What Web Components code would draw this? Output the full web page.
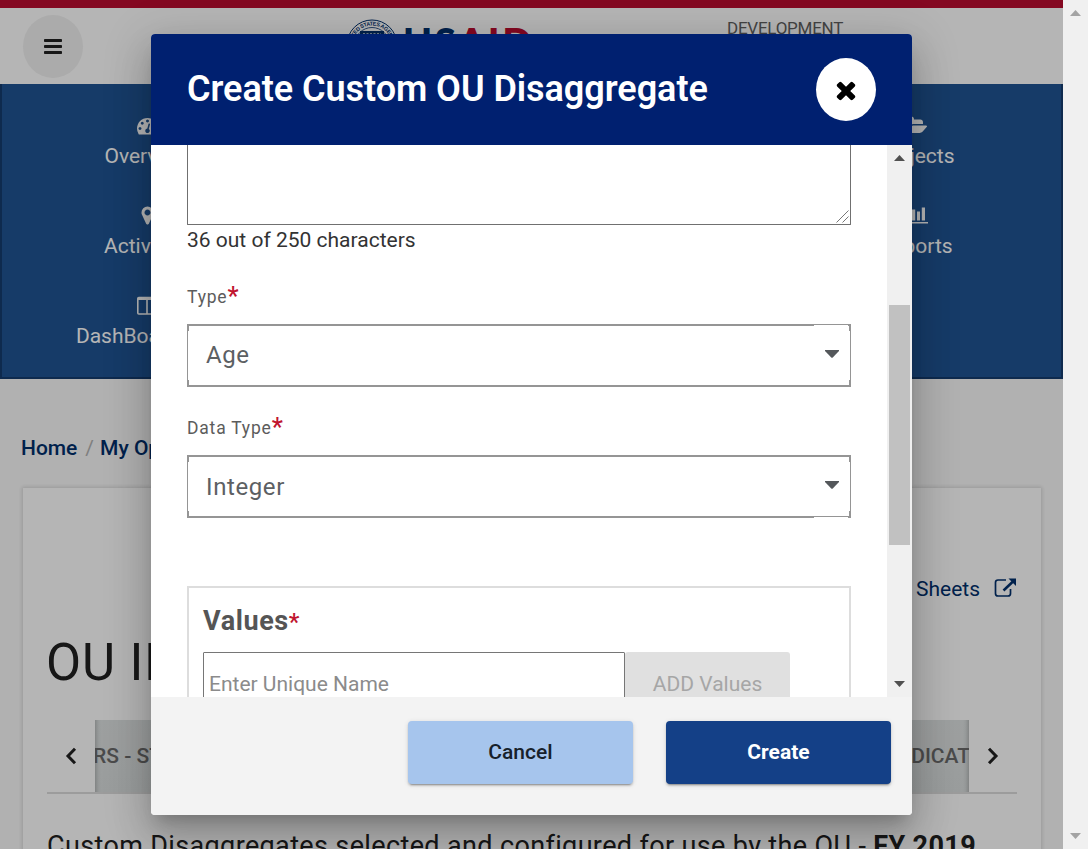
<!DOCTYPE html>
<html lang="en">
<head>
<meta charset="utf-8">
<title>Create Custom OU Disaggregate</title>
<style>
html,body{margin:0;padding:0;width:1088px;height:849px;overflow:hidden;font-family:Roboto,"Liberation Sans",sans-serif}
</style>
</head>
<body>
<ou-app></ou-app>
<script>
const define = (name, html) => customElements.define(name, class extends HTMLElement {
  constructor() {
    super();
    const t = document.createElement('template');
    t.innerHTML = html;
    this.attachShadow({mode: 'open'}).appendChild(t.content.cloneNode(true));
  }
});

define('site-header', `<style>
:host{display:flex;box-sizing:border-box;height:84px;border-top:8px solid #ba0c2f;background:#fff;position:relative}
.menu{width:60px;height:63px;border-radius:50%;background:#f1f1f1;margin:7px 0 0 23px;display:flex;align-items:center;justify-content:center}
.menu svg{margin-right:1px}
.seal{margin:11px 0 0 263px;width:52px;height:52px}
.word{margin:10px 0 0 5px;width:133px;font:900 39px/48px Lato,"Open Sans",sans-serif;color:#002f6c;white-space:nowrap;letter-spacing:2.5px}
.word b{color:#ba0c2f;font-weight:900}
.dev{margin:11px 0 0 191px;font-size:17px;line-height:18px;color:#606060;letter-spacing:-.25px}
</style>
<div class="menu"><svg width="18" height="15" viewBox="0 0 18 15"><g fill="#212121"><rect width="18" height="3" rx=".8"/><rect y="6" width="18" height="3" rx=".8"/><rect y="12" width="18" height="3" rx=".8"/></g></svg></div>
<svg class="seal" viewBox="0 0 52 52"><circle cx="26" cy="26" r="25" fill="none" stroke="#002f6c" stroke-width="1"/><defs><path id="arc" d="M6.5 26a19.5 19.5 0 0 1 39 0"/></defs><text font-family="Liberation Sans" font-weight="700" font-size="5.4" fill="#002f6c"><textPath href="#arc" textLength="60">UNITED STATES AGENCY</textPath></text><circle cx="26" cy="26" r="17.5" fill="none" stroke="#002f6c" stroke-width=".8"/><path fill="#002f6c" d="M14 12h24v15q0 8-12 14-12-6-12-14z"/><path d="M17 14.500h18" stroke="#fff" stroke-width=".6" stroke-dasharray="2 1.5"/></svg>
<div class="word">US<b>AID</b></div>
<div class="dev">DEVELOPMENT</div>`);

define('nav-item', `<style>
:host{display:flex;flex-direction:column;align-items:center;height:90px;color:#fff;font-size:21px;line-height:24px;white-space:nowrap}
.i{height:22px;margin:0 0 8px;display:flex;align-items:center}
</style><div class="i"><slot name="icon"></slot></div><div><slot></slot></div>`);

define('main-nav', `<style>
:host{display:flex;justify-content:space-between;box-sizing:border-box;height:295px;background:#205493;border:2px solid #153c6f;border-top:0;padding-top:30px}
.a{width:290px}.b{width:290px}
svg{display:block;fill:#fff}
</style>
<div class="a">
<nav-item><svg slot="icon" width="21" height="21" viewBox="0 0 1792 1792"><path d="M384 1152q0-53-37.5-90.5t-90.5-37.5-90.5 37.5-37.5 90.5 37.5 90.5 90.5 37.5 90.5-37.5 37.5-90.5zm192-448q0-53-37.5-90.5t-90.5-37.5-90.5 37.5-37.5 90.5 37.5 90.5 90.5 37.5 90.5-37.5 37.5-90.5zm428 481l101-382q6-26-7.5-48.5t-38.5-29.5-48 6.5-30 39.5l-101 382q-60 5-107 43.5t-63 98.5q-20 77 20 146t117 89 146-20 89-117q16-60-6-117t-72-91zm660-33q0-53-37.5-90.5t-90.5-37.5-90.5 37.5-37.5 90.5 37.5 90.5 90.5 37.5 90.5-37.5 37.5-90.5zm-640-640q0-53-37.5-90.5t-90.5-37.5-90.5 37.5-37.5 90.5 37.5 90.5 90.5 37.5 90.5-37.5 37.5-90.5zm448 192q0-53-37.5-90.5t-90.5-37.5-90.5 37.5-37.5 90.5 37.5 90.5 90.5 37.5 90.5-37.5 37.5-90.5zm320 448q0 261-141 483-19 29-54 29h-1402q-35 0-54-29-141-221-141-483 0-182 71-348t191-286 286-191 348-71 348 71 286 191 191 286 71 348z"/></svg>Overview</nav-item>
<nav-item><svg slot="icon" width="21" height="21" viewBox="0 0 1792 1792"><path d="M1152 640q0-106-75-181t-181-75-181 75-75 181 75 181 181 75 181-75 75-181zm256 0q0 109-33 179l-364 774q-16 33-47.5 52t-67.5 19-67.5-19-46.5-52l-365-774q-33-70-33-179 0-212 150-362t362-150 362 150 150 362z"/></svg>Activities</nav-item>
<nav-item><svg slot="icon" width="20" height="19" viewBox="0 0 20 19"><path fill="none" stroke="#fff" stroke-width="1.6" d="M1.8 1.500h16.400q1 0 1 1v14.500q0 1-1 1H1.800q-1 0-1-1V2.500q0-1 1-1zM10 3v15"/><path d="M1 1h18v3H1z"/></svg>DashBoard List</nav-item>
</div>
<div class="b">
<nav-item><svg slot="icon" width="22" height="21" viewBox="0 0 1879 1792"><path d="M1879 952q0 31-31 66l-336 396q-43 51-120.5 86.5t-143.5 35.5h-1088q-34 0-60.5-13t-26.5-43q0-31 31-66l336-396q43-51 120.5-86.5t143.5-35.5h1088q34 0 60.5 13t26.5 43zm-343-344v160h-832q-94 0-197 47.5t-164 119.5l-337 396-5 6q0-4-.5-12.5t-.5-12.5v-960q0-92 66-158t158-66h320q92 0 158 66t66 158v32h544q92 0 158 66t66 158z"/></svg>Projects</nav-item>
<nav-item><svg slot="icon" width="24" height="18" viewBox="0 0 24 18"><path d="M0 16h24v1.600H0zM3 9h3v5H3zM8 3.500h3.200V14.500H8zM13 5.500h3v9h-3zM17.800 1.500h3.200v13h-3.200z"/></svg>Reports</nav-item>
</div>`);

define('bread-crumb', `<style>
:host{display:block;padding:57px 0 0 21px;height:24px;font-size:21px;line-height:24px;font-weight:500;color:#002f6c;white-space:nowrap}
i{font-style:normal;font-weight:400;color:#b4b4b4;margin:0 6px 0 8px}
</style>Home<i>/</i>My Operating Unit`);

define('tab-strip', `<style>
:host{display:flex;align-items:stretch;width:970px;height:72px;border-bottom:2px solid #dcdcdc}
.c{width:48px;display:flex;align-items:center;justify-content:center}
.w{flex:1;overflow:hidden;display:flex;justify-content:space-between;align-items:center;background:linear-gradient(#dee2e2,#dadede);font-size:21px;font-weight:500;color:#6a6a6a;white-space:nowrap;box-shadow:inset 7px 0 5px -6px rgba(0,0,0,.25),inset -7px 0 5px -6px rgba(0,0,0,.25)}
.l{margin-left:-2px}.r{margin-right:-1px}
</style>
<div class="c"><svg width="12" height="18" viewBox="0 0 12 18"><path d="M10 1.8L3 9l7 7.2" fill="none" stroke="#212121" stroke-width="3"/></svg></div>
<div class="w"><span class="l">RS - STANDARD</span><span class="r">INDICAT</span></div>
<div class="c"><svg width="12" height="18" viewBox="0 0 12 18"><path d="M2 1.8L9 9l-7 7.2" fill="none" stroke="#212121" stroke-width="3"/></svg></div>`);

define('ou-card', `<style>
:host{display:block;box-sizing:border-box;margin:28px 0 0 23px;width:1018px;height:400px;padding:0 24px;background:#fff;box-shadow:0 0 4px 1px rgba(0,0,0,.15)}
.link{display:flex;justify-content:flex-end;align-items:center;padding-top:89px;height:24px;font-size:21px;line-height:24px;color:#002f6c;gap:14px}
.link svg{margin-top:-2px}
h1{margin:30px 0 0 -1px;font-size:51px;line-height:64px;font-weight:400;color:#212121;white-space:nowrap;letter-spacing:.9px}
tab-strip{margin-top:25px}
p{margin:36px 0 0;font-size:27px;line-height:32px;color:#212121;white-space:nowrap;letter-spacing:.36px}
b{font-weight:700}
</style>
<div class="link"><span>Reference Sheets</span><svg width="23" height="20" viewBox="0 0 23 20"><path fill="none" stroke="#002f6c" stroke-width="1.7" d="M12 2H4Q1.500 2 1.500 4.500V15.500Q1.500 18 4 18H14Q16.500 18 16.500 15.500V11"/><path d="M9.500 12.500L19 3.500" stroke="#002f6c" stroke-width="2.500"/><path fill="#002f6c" d="M14.500 .500H22V8z"/></svg></div>
<h1>OU INDICATORS</h1>
<tab-strip></tab-strip>
<p>Custom Disaggregates selected and configured for use by the OU - <b>FY 2019</b></p>`);

define('scroll-bar', `<style>
:host{display:flex;flex-direction:column;align-items:center;justify-content:space-between;box-sizing:border-box;width:25px;background:#f0f0f0;padding:10px 0;color:#505050}
svg{display:block;fill:currentColor}
</style><svg width="11" height="6" viewBox="0 0 11 6"><path d="M0 6L5.500 0 11 6z"/></svg><slot></slot><svg width="11" height="6" viewBox="0 0 11 6"><path d="M0 0L5.500 6 11 0z"/></svg>`);

define('select-field', `<style>
:host{display:block}
label{display:block;height:26px;font-size:17.500px;line-height:26px;color:#5c5c5c;letter-spacing:.8px;white-space:nowrap}
label b{font-weight:500;color:#c0142f;font-size:25px;line-height:20px;letter-spacing:0;position:relative;top:2px}
.s{position:relative;display:flex;align-items:center;justify-content:space-between;box-sizing:border-box;height:63px;margin-top:14px;border:2px solid #959595;border-left-width:1px;border-right-width:1px;padding:0 11px 0 18px;font-size:24px;letter-spacing:.6px;color:#5c6063;background:#fff}
.s>svg{margin-top:-4px}
:host([cut=top]) .s>span{margin-top:-2px}
.s:after{content:"";position:absolute;right:2px;width:34px;height:1px;background:#fff}
:host([cut=top]) .s:after{top:-1px}
:host([cut=bottom]) .s:after{bottom:-2px}
.k{position:absolute;width:1px;height:5px;background:#959595}
</style>
<label><slot name="label"></slot><b>*</b></label>
<div class="s"><span><slot></slot></span><svg width="14" height="8" viewBox="0 0 14 8"><path fill="#54585b" d="M0 0h14v1L7.500 7.800h-1L0 1z"/></svg>
<i class="k" style="left:0;top:0"></i><i class="k" style="left:0;bottom:0"></i><i class="k" style="right:0;top:0"></i><i class="k" style="right:0;bottom:0"></i></div>`);

define('values-box', `<style>
:host{display:block;box-sizing:border-box;border:2px solid #ddd;height:140px;padding:17px 14px}
h2{margin:0;font-size:27px;line-height:32px;font-weight:700;color:#555;letter-spacing:.6px}
h2 b{color:#c0142f;font-weight:500;font-size:24px;line-height:20px;letter-spacing:0}
.r{display:flex;margin-top:15px;font-size:21px}
.in{box-sizing:border-box;width:422px;height:63px;line-height:62px;border:1px solid #767676;border-radius:1px;padding-left:5px;color:#8b8b8b}
.bt{width:165px;height:63px;line-height:64px;text-align:center;background:#e0e0e0;border-radius:3px;color:#a6a6a6}
</style><h2>Values<b>*</b></h2><div class="r"><div class="in">Enter Unique Name</div><div class="bt">ADD Values</div></div>`);

define('app-button', `<style>
:host{display:block;width:225px;height:63px;line-height:62px;border-radius:4px;text-align:center;font-size:21px;font-weight:500;background:#a6c5ed;color:#17212b;box-shadow:0 3px 1px -2px rgba(0,0,0,.2),0 2px 2px 0 rgba(0,0,0,.14),0 1px 5px 0 rgba(0,0,0,.12)}
:host([primary]){background:#144087;color:#fff;font-weight:700}
</style><slot></slot>`);

define('modal-dialog', `<style>
:host{display:flex;flex-direction:column;width:761px;height:781px;border-radius:4px;overflow:hidden;background:#fff}
header{box-sizing:border-box;height:111px;background:#002070;display:flex;justify-content:space-between;align-items:center;padding:0 36px}
h1{margin:-2px 0 0;font-size:36px;line-height:44px;font-weight:600;letter-spacing:-.04px;color:#fff;white-space:nowrap}
.x{width:60px;height:63px;border-radius:50%;background:#fff;display:flex;align-items:center;justify-content:center}
.body{height:552px;overflow:hidden;display:flex;justify-content:space-between}
.f{width:664px;margin-left:36px}
.ta{box-sizing:border-box;height:80px;border:1px solid #707070;border-top:0;border-radius:0 0 1px 1px;display:flex;justify-content:flex-end;align-items:flex-end;padding:1px}
.count{font-size:21px;line-height:24px;margin:3px 0 32px;color:#333}
select-field{margin-bottom:28px}
values-box{margin-top:68px}
scroll-bar{height:552px}
.th{width:21px;height:240px;background:#c1c1c1;margin-top:8px}
footer{flex:1;background:#f3f3f3;display:flex;justify-content:flex-end;align-items:flex-start;gap:33px;padding:24px 21px 0}
</style>
<header><h1>Create Custom OU Disaggregate</h1><div class="x"><svg width="28" height="28" viewBox="0 0 1792 1792"><path d="M1490 1322q0 40-28 68l-136 136q-28 28-68 28t-68-28l-294-294-294 294q-28 28-68 28t-68-28l-136-136q-28-28-28-68t28-68l294-294-294-294q-28-28-28-68t28-68l136-136q28-28 68-28t68 28l294 294 294-294q28-28 68-28t68 28l136 136q28 28 28 68t-28 68l-294 294 294 294q28 28 28 68z"/></svg></div></header>
<div class="body"><div class="f">
<div class="ta"><svg width="13" height="13" viewBox="0 0 13 13"><path d="M.500 12.500l12-12M6.500 12.500l6-6" stroke="#777" stroke-width="1"/></svg></div>
<div class="count">36 out of 250 characters</div>
<select-field cut="top"><span slot="label">Type</span>Age</select-field>
<select-field cut="bottom"><span slot="label">Data Type</span>Integer</select-field>
<values-box></values-box>
</div><scroll-bar><div class="th"></div></scroll-bar></div>
<footer><app-button>Cancel</app-button><app-button primary>Create</app-button></footer>`);

define('ou-app', `<style>
:host{display:flex;position:relative;width:1088px;height:849px;overflow:hidden}
.page{width:1063px;background:#fafafa;overflow:hidden}
.veil{position:absolute;left:0;top:0;width:1063px;height:849px;box-sizing:border-box;padding:34px 0 0 151px;background:rgba(0,0,0,.29);overflow:hidden}
modal-dialog{box-shadow:0 11px 15px -7px rgba(0,0,0,.2),0 24px 38px 3px rgba(0,0,0,.14),0 9px 46px 8px rgba(0,0,0,.12)}
scroll-bar{color:#a3a3a3}
</style>
<div class="page"><site-header></site-header><main-nav></main-nav><bread-crumb></bread-crumb><ou-card></ou-card></div>
<scroll-bar></scroll-bar>
<div class="veil"><modal-dialog></modal-dialog></div>`);
</script>
</body>
</html>
